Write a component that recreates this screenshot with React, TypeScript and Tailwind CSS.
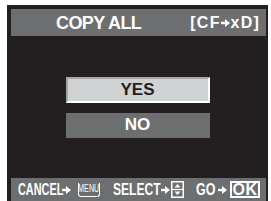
const narrow = { fontFamily: '"Liberation Sans Narrow", "Liberation Sans", Arial, sans-serif' };
const sans = { fontFamily: '"Liberation Sans", Arial, sans-serif' };

function Arrow({ className = "" }: { className?: string }) {
  return (
    <svg width="9" height="8" viewBox="0 0 9 8" className={`shrink-0 ${className}`}>
      <rect x="0" y="2.8" width="5" height="2.4" fill="#ffffff" />
      <polygon points="4,0 9,4 4,8" fill="#ffffff" />
    </svg>
  );
}

function UpDown() {
  return (
    <svg width="13" height="17" viewBox="0 0 13 17">
      <rect x="0.75" y="0.75" width="11.5" height="15.5" fill="none" stroke="white" strokeWidth="1.5" />
      <line x1="1" y1="8.5" x2="12" y2="8.5" stroke="white" strokeWidth="1.2" />
      <polygon points="6.5,3 9.5,6.5 3.5,6.5" fill="white" />
      <polygon points="6.5,14 9.5,10.5 3.5,10.5" fill="white" />
    </svg>
  );
}

export default function App() {
  return (
    <div className="w-[271px] h-[201px] bg-white overflow-hidden">
      <div className="ml-[7px] mt-[5px] w-[261px] h-[196px] bg-[#231f20] flex flex-col pt-[4px] pl-[4px] pr-[2px]">
        {/* header */}
        <div className="h-[27px] bg-[#6d6e70] flex items-center text-white font-bold">
          <span
            className="ml-[45px] text-[18px] tracking-[-0.6px] leading-none"
            style={narrow}
          >
            COPY ALL
          </span>
          <span
            className="ml-auto mr-[6px] flex items-center text-[16px] tracking-[1.2px] leading-none"
            style={sans}
          >
            [CF
            <Arrow className="mr-[1px]" />
            xD]
          </span>
        </div>

        {/* choices */}
        <div className="flex-1 flex flex-col items-center justify-center gap-[10px] pr-[2px]">
          <div
            className="w-[144px] h-[26px] bg-[#d1d2d3] border-2 border-white border-t-[#a5a5a7] border-l-[#a5a5a7] flex items-center justify-center text-[#231f20] text-[17px] font-bold"
            style={narrow}
          >
            YES
          </div>
          <div
            className="w-[144px] h-[25px] bg-[#6d6e70] flex items-center justify-center text-white text-[17px] font-bold"
            style={narrow}
          >
            NO
          </div>
        </div>

        {/* footer */}
        <div
          className="h-[23px] bg-[#6d6e70] flex items-center text-white font-bold text-[16.5px] leading-none pl-[7px] whitespace-nowrap"
          style={sans}
        >
          <span className="w-[44px] shrink-0">
            <span className="inline-block origin-left scale-x-[0.66]">CANCEL</span>
          </span>
          <Arrow />
          <span className="ml-[7px] w-[22px] h-[14px] shrink-0 flex items-center justify-center border-[1.5px] border-white rounded-b-[3px] border-t-0 text-[10px] font-normal">
            <span className="inline-block scale-x-[0.72]">MENU</span>
          </span>
          <span className="ml-[13px] w-[48px] shrink-0">
            <span className="inline-block origin-left scale-x-[0.73]">SELECT</span>
          </span>
          <Arrow />
          <span className="ml-[1px] flex shrink-0">
            <UpDown />
          </span>
          <span className="ml-[12px] w-[20px] shrink-0">
            <span className="inline-block origin-left scale-x-[0.76]">GO</span>
          </span>
          <Arrow className="ml-[2px]" />
          <span className="ml-[3px] w-[30px] shrink-0 border-2 border-white h-[17px] flex items-center justify-center text-[16px] tracking-[0.5px]">
            OK
          </span>
        </div>
      </div>
    </div>
  );
}
